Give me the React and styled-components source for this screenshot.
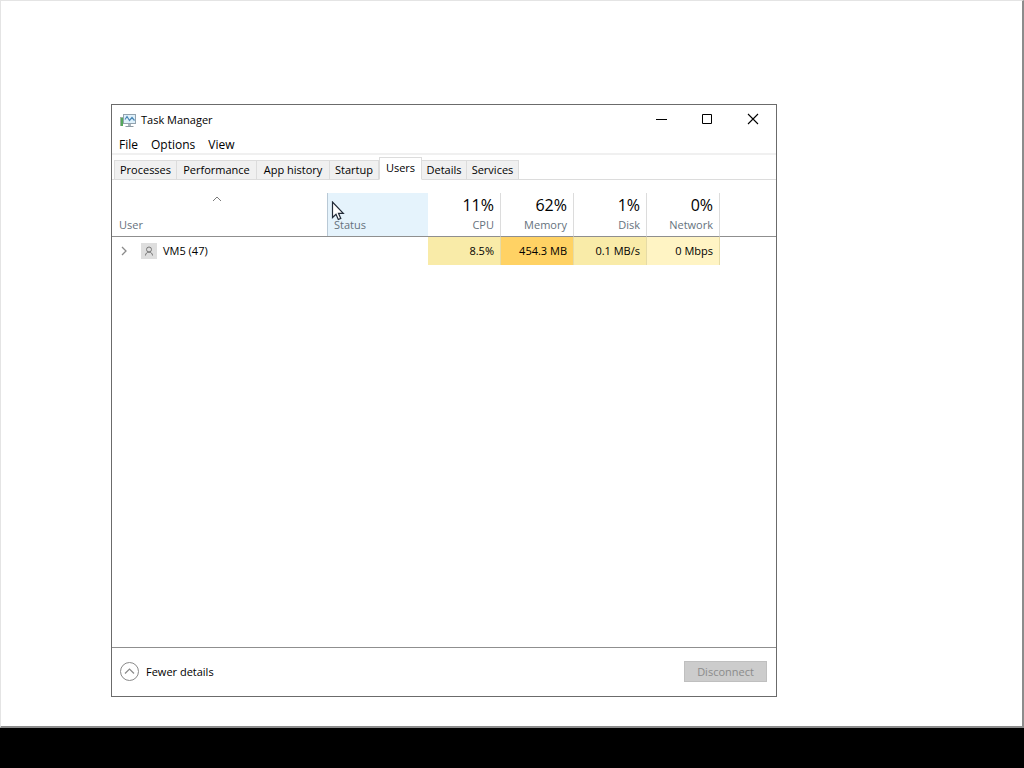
import React, { useState } from 'react';
import styled, { createGlobalStyle } from 'styled-components';

const tabs = [
    { name: 'Processes', width: 63 },
    { name: 'Performance', width: 80 },
    { name: 'App history', width: 73 },
    { name: 'Startup', width: 49 },
    { name: 'Users', width: 43 },
    { name: 'Details', width: 45 },
    { name: 'Services', width: 52 },
];

const usage = [
    { label: 'CPU', total: '11%', value: '8.5%', heat: '#f9eba8' },
    { label: 'Memory', total: '62%', value: '454.3 MB', heat: '#ffd264' },
    { label: 'Disk', total: '1%', value: '0.1 MB/s', heat: '#f9eba8' },
    { label: 'Network', total: '0%', value: '0 Mbps', heat: '#fff4c4' },
];

const AppIcon = () => (
    <svg width="16" height="16" viewBox="0 0 16 16" aria-hidden="true">
        <path d="M8 11h3v3H8z" fill="#a9b4bb" />
        <path d="M5.500 14.500h8" stroke="#8d9aa3" />
        <rect x="3.500" y="2.500" width="12" height="9" fill="#dff1fb" stroke="#93a3af" />
        <path d="M5 7.500l2-3 2.500 4 2.500-3 2.500 3" fill="none" stroke="#4a86b4" strokeWidth="1.200" />
        <rect x="0" y="5" width="3" height="9" fill="#9fb3a3" />
        <rect x="1" y="6" width="2" height="8" fill="#55a85c" />
    </svg>
);

const Cursor = () => (
    <svg width="14" height="20" viewBox="0 0 14 20" aria-hidden="true">
        <path d="M1.500 1v15.500l3.500-3.300 2.300 5.300 2.500-1.100-2.300-5.100h4.800z" fill="#fff" stroke="#222b38" strokeWidth="1.200" />
    </svg>
);

const App = () => {
    const [active, setActive] = useState('Users');

    return (
        <Page>
            <GlobalStyle />
            <Desktop>
                <Window>
                    <TitleBar>
                        <AppIcon />
                        <Title>Task Manager</Title>
                        <Captions>
                            <Caption aria-label="Minimize">
                                <svg width="12" height="12"><path d="M1 6.500h11" stroke="#000" /></svg>
                            </Caption>
                            <Caption aria-label="Maximize">
                                <svg width="12" height="12"><path d="M1.500 1.500h9v9h-9z" fill="none" stroke="#000" /></svg>
                            </Caption>
                            <Caption aria-label="Close">
                                <svg width="12" height="12"><path d="M1 1l10 10M11 1L1 11" stroke="#000" strokeWidth="1.100" /></svg>
                            </Caption>
                        </Captions>
                    </TitleBar>
                    <MenuBar>
                        <MenuItem>File</MenuItem>
                        <MenuItem>Options</MenuItem>
                        <MenuItem>View</MenuItem>
                    </MenuBar>
                    <TabBar role="tablist">
                        {tabs.map(({ name, width }) => (
                            <Tab
                                key={name}
                                role="tab"
                                aria-selected={active === name}
                                $active={active === name}
                                $width={width}
                                onClick={() => setActive(name)}
                            >
                                {name}
                            </Tab>
                        ))}
                    </TabBar>
                    <Content>
                        <Table>
                            <colgroup>
                                <Col $width={215} />
                                <Col $width={101} />
                                {usage.map(({ label }) => <Col key={label} $width={73} />)}
                                <col />
                            </colgroup>
                            <thead>
                                <tr>
                                    <Head>
                                        <SortMark>
                                            <svg width="10" height="6"><path d="M1 5l4-4 4 4" fill="none" stroke="#7b7b7b" /></svg>
                                        </SortMark>
                                        <Label>User</Label>
                                    </Head>
                                    <Head $hover>
                                        <Total />
                                        <Label>Status</Label>
                                        <Pointer><Cursor /></Pointer>
                                    </Head>
                                    {usage.map(({ label, total }) => (
                                        <Head key={label} $number>
                                            <Total>{total}</Total>
                                            <Label>{label}</Label>
                                        </Head>
                                    ))}
                                    <Head />
                                </tr>
                            </thead>
                            <tbody>
                                <tr>
                                    <Cell>
                                        <UserName>
                                            <svg width="10" height="10"><path d="M3 1l4 4-4 4" fill="none" stroke="#8a8a8a" strokeWidth="1.300" /></svg>
                                            <Avatar>
                                                <svg width="10" height="10">
                                                    <circle cx="5" cy="3.500" r="2.500" fill="none" stroke="#777" />
                                                    <path d="M1.500 9.500c0-4.500 7-4.500 7 0" fill="none" stroke="#777" />
                                                </svg>
                                            </Avatar>
                                            VM5 (47)
                                        </UserName>
                                    </Cell>
                                    <Cell />
                                    {usage.map(({ label, value, heat }) => (
                                        <Cell key={label} $heat={heat}>{value}</Cell>
                                    ))}
                                    <Cell />
                                </tr>
                            </tbody>
                        </Table>
                    </Content>
                    <Footer>
                        <Details>
                            <svg width="20" height="20">
                                <circle cx="9.500" cy="9.500" r="9" fill="none" stroke="#8a8a8a" />
                                <path d="M5 11.500L9.500 7l4.500 4.500" fill="none" stroke="#8a8a8a" strokeWidth="1.200" />
                            </svg>
                            Fewer details
                        </Details>
                        <Disconnect disabled>Disconnect</Disconnect>
                    </Footer>
                </Window>
            </Desktop>
        </Page>
    );
};

export default App;

const GlobalStyle = createGlobalStyle`
* {
    box-sizing: border-box;
}
body {
    margin: 0;
    background: #000;
    color: #000;
    font: 11px/16px 'Open Sans', 'Noto Sans', sans-serif;
}
button {
    margin: 0;
    padding: 0;
    border: 0;
    background: none;
    color: inherit;
    font: inherit;
}
svg {
    display: block;
    flex: none;
}
`

const Page = styled.div`
display: flex;
flex-direction: column;
min-height: 100vh;
padding-bottom: 40px;
`

const Desktop = styled.main`
flex: 1;
display: flex;
padding: 103px 245px 29px 110px;
background: #fff;
border: 1px solid #e4e4e4;
border-right: 2px solid #8c8c8c;
border-bottom: 2px solid #8c8c8c;
`

const Window = styled.section`
flex: 1;
min-width: 0;
display: flex;
flex-direction: column;
border: 1px solid #6b6b6b;
background: #fff;
`

const TitleBar = styled.header`
display: flex;
align-items: center;
height: 30px;
padding-left: 8px;
`

const Title = styled.h1`
flex: 1;
margin: 0 0 0 5px;
font-size: 11px;
font-weight: 400;
`

const Captions = styled.div`
display: flex;
align-self: flex-start;
`

const Caption = styled.button`
display: flex;
align-items: center;
justify-content: center;
width: 46px;
height: 28px;
`

const MenuBar = styled.nav`
display: flex;
gap: 13px;
height: 20px;
padding-left: 7px;
border-bottom: 2px solid #f0f0f0;
font-size: 12px;
`

const MenuItem = styled.button`
height: 20px;
`

const TabBar = styled.div`
display: flex;
align-items: flex-end;
height: 25px;
padding-left: 2px;
border-bottom: 1px solid #dcdcdc;
`

const Tab = styled.button`
width: ${({ $width }) => $width}px;
height: ${({ $active }) => ($active ? 23 : 20)}px;
margin-bottom: -1px;
padding-bottom: ${({ $active }) => ($active ? 2 : 0)}px;
border: 1px solid #dcdcdc;
border-left-width: ${({ $active }) => ($active ? 1 : 0)}px;
border-bottom-color: ${({ $active }) => ($active ? '#fff' : '#dcdcdc')};
background: ${({ $active }) => ($active ? '#fff' : '#f0f0f0')};
white-space: nowrap;

&:first-child {
    border-left-width: 1px;
}
`

const Content = styled.div`
flex: 1;
padding-top: 13px;
`

const Table = styled.table`
width: 100%;
table-layout: fixed;
border-collapse: separate;
border-spacing: 0;
`

const Col = styled.col`
width: ${({ $width }) => $width}px;
`

const Head = styled.th`
position: relative;
height: 44px;
padding: 2px 6px 1px 7px;
border-bottom: 1px solid #8f8f8f;
background: ${({ $hover }) => ($hover ? '#e5f3fc' : '#fff')};
box-shadow: ${({ $hover }) => ($hover ? 'inset 1px 0 #b9c9d6' : 'none')};
font-weight: 400;
text-align: ${({ $number }) => ($number ? 'right' : 'left')};
vertical-align: top;
${({ $number }) => $number && 'border-right: 1px solid #dcdcdc;'}
`

const Total = styled.div`
height: 20px;
font-size: 16px;
line-height: 20px;
`

const SortMark = styled.div`
display: flex;
justify-content: center;
height: 20px;
padding: 1px 6px 0 0;
`

const Label = styled.div`
height: 20px;
line-height: 20px;
color: #66727d;
`

const Pointer = styled.div`
position: absolute;
left: 4px;
top: 8px;
`

const Cell = styled.td`
height: 28px;
padding: 0 6px 0 7px;
background: ${({ $heat }) => $heat || '#fff'};
text-align: ${({ $heat }) => ($heat ? 'right' : 'left')};
white-space: nowrap;
${({ $heat }) => $heat && 'border-right: 1px solid #e6dba6;'}
`

const UserName = styled.div`
display: flex;
align-items: center;
gap: 6px;
`

const Avatar = styled.span`
display: flex;
align-items: center;
justify-content: center;
width: 16px;
height: 16px;
margin-left: 6px;
background: #dedede;
`

const Footer = styled.footer`
display: flex;
align-items: center;
justify-content: space-between;
height: 49px;
padding: 0 9px 1px 8px;
border-top: 1px solid #8f8f8f;
`

const Details = styled.button`
display: flex;
align-items: center;
gap: 6px;
`

const Disconnect = styled.button`
width: 83px;
height: 21px;
border: 1px solid #bfbfbf;
background: #cccccc;
color: #8b8b8b;
`
